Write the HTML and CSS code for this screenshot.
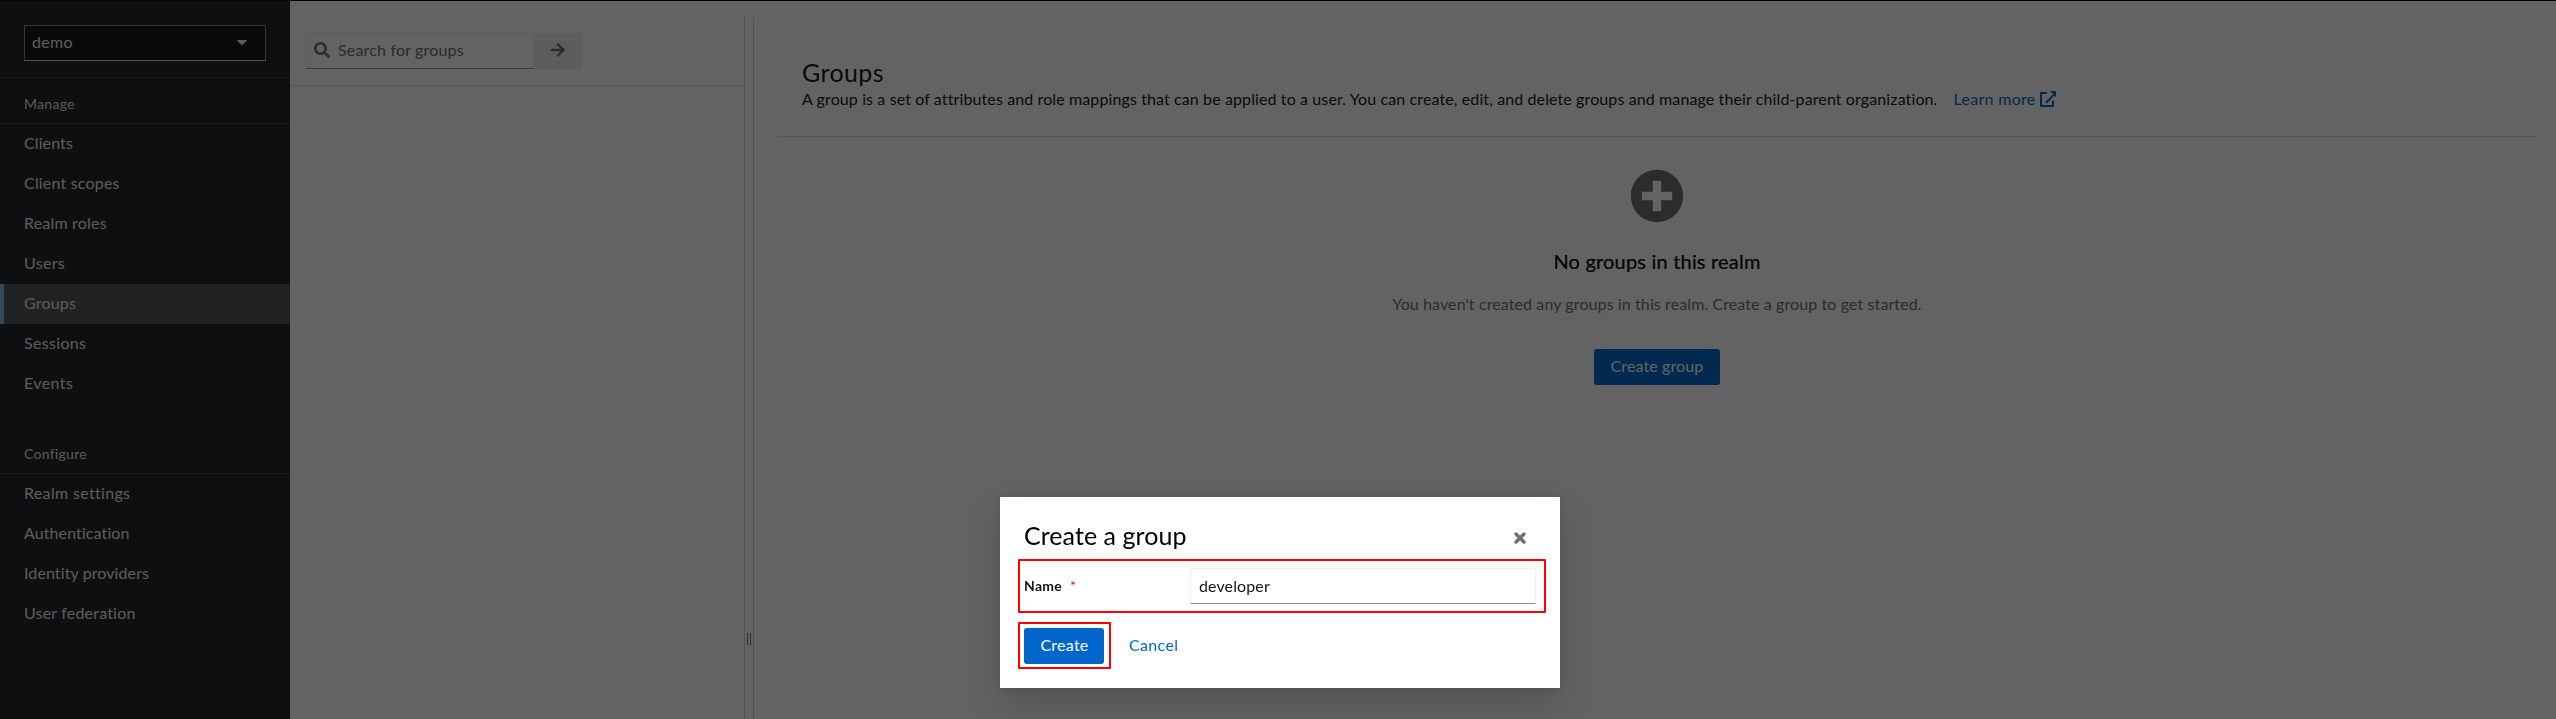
FILE: index.html
```html
<!DOCTYPE html>
<html lang="en">
<head>
<meta charset="utf-8">
<title>Groups</title>
<link rel="stylesheet" href="styles.css">
</head>
<body>
<div class="page">
  <nav class="sidebar">
    <div class="realm">
      <button class="realm-select"><span>demo</span><svg width="10" height="5" viewBox="0 0 10 5"><path fill="currentColor" d="M.5 0h9q.8.2.2.9L5.6 4.700q-.6.5-1.200 0L.3.9Q-.3.2.5 0z"/></svg></button>
    </div>
    <section class="nav-section">
      <h2>Manage</h2>
      <a class="w1">Clients</a>
      <a>Client scopes</a>
      <a>Realm roles</a>
      <a class="w3">Users</a>
      <a class="current">Groups</a>
      <a class="w3">Sessions</a>
      <a class="w4">Events</a>
    </section>
    <section class="nav-section">
      <h2>Configure</h2>
      <a class="w3">Realm settings</a>
      <a class="w1">Authentication</a>
      <a class="w1">Identity providers</a>
      <a>User federation</a>
    </section>
  </nav>
  <main class="main">
    <aside class="tree">
      <div class="toolbar">
        <div class="search">
          <svg width="16" height="16" viewBox="0 0 512 512"><path fill="currentColor" d="M505 442.700L405.300 343c-4.500-4.500-10.600-7-17-7H372c27.600-35.300 44-79.700 44-128C416 93.100 322.900 0 208 0S0 93.100 0 208s93.100 208 208 208c48.300 0 92.700-16.400 128-44v16.300c0 6.400 2.500 12.500 7 17l99.700 99.700c9.400 9.400 24.600 9.400 33.900 0l28.300-28.300c9.400-9.400 9.400-24.600.1-34zM208 336c-70.700 0-128-57.200-128-128 0-70.700 57.200-128 128-128 70.700 0 128 57.200 128 128 0 70.700-57.200 128-128 128z"/></svg>
          <span>Search for groups</span>
        </div>
        <button class="go" aria-label="Search"><svg width="14" height="16" viewBox="0 0 448 512"><path fill="currentColor" d="M190.500 66.900l22.200-22.200c9.400-9.400 24.600-9.400 33.900 0L441 239c9.400 9.400 9.400 24.600 0 33.900L246.600 467.300c-9.400 9.400-24.600 9.400-33.900 0l-22.200-22.200c-9.500-9.500-9.300-25 .4-34.300L311.400 296H24c-13.300 0-24-10.700-24-24v-32c0-13.300 10.700-24 24-24h287.400L190.900 101.200c-9.800-9.300-10-24.800-.4-34.300z"/></svg></button>
      </div>
    </aside>
    <div class="splitter"><i></i><i></i></div>
    <div class="content">
      <header class="intro">
        <h1>Groups</h1>
        <p><span class="desc">A group is a set of attributes and role mappings that can be applied to a user. You can create, edit, and delete groups and manage their child-parent organization.</span><a class="learn">Learn more</a><svg class="ext" width="16" height="16" viewBox="0 0 512 512"><path fill="currentColor" d="M224 32v64H64v352h320V304h64v176q0 32-32 32H32q-32 0-32-32V64q0-32 32-32zM316 0h180q16 0 16 16v180l-52-52-230 250q-10 10-20 0l-34-34q-8-8 0-18L420 104z"/></svg></p>
      </header>
      <div class="empty">
        <svg width="54" height="54" viewBox="0 0 512 512"><path fill="currentColor" d="M256 8C119 8 8 119 8 256s111 248 248 248 248-111 248-248S393 8 256 8zm144 276c0 6.600-5.400 12-12 12h-92v92c0 6.600-5.400 12-12 12h-56c-6.600 0-12-5.400-12-12v-92h-92c-6.600 0-12-5.400-12-12v-56c0-6.600 5.400-12 12-12h92v-92c0-6.600 5.400-12 12-12h56c6.600 0 12 5.400 12 12v92h92c6.600 0 12 5.400 12 12v56z"/></svg>
        <h2>No groups in this realm</h2>
        <p>You haven't created any groups in this realm. Create a group to get started.</p>
        <button class="primary">Create group</button>
      </div>
    </div>
  </main>
</div>
<div class="backdrop">
  <div class="modal" role="dialog">
    <header><h1>Create a group</h1>
      <svg width="12" height="12" viewBox="0 0 12 12"><path d="M2 2l8 8M10 2l-8 8" stroke="currentColor" stroke-width="3.300" stroke-linecap="round" fill="none"/></svg>
    </header>
    <div class="field">
      <label>Name<b>*</b></label>
      <div class="input">developer</div>
      <div class="mark"></div>
    </div>
    <footer>
      <div class="create"><button class="primary">Create</button><div class="mark"></div></div>
      <a>Cancel</a>
    </footer>
  </div>
</div>
</body>
</html>
```
FILE: styles.css
```css
* { box-sizing: border-box; }
body {
  margin: 0;
  height: 719px;
  overflow: hidden;
  background: #fff;
  color: #151515;
  font: 16px/24px Lato, "Open Sans", sans-serif;
  letter-spacing: .12px;
}
h1, h2, p { margin: 0; font-weight: 400; }
svg { display: block; flex: none; }
button { font: inherit; letter-spacing: inherit; }

.page {
  display: grid;
  grid-template-columns: 290px 1fr;
  height: 719px;
  border-top: 1px solid #000;
}

/* sidebar */
.sidebar { background: #212427; color: #ebebeb; }
.realm { height: 77px; padding: 24px; border-bottom: 1px solid #3c3f42; }
.realm-select {
  display: flex;
  align-items: center;
  justify-content: space-between;
  width: 242px;
  height: 36px;
  padding: 0 18px 2px 7px;
  background: #151515;
  border: 1px solid #8a8d90;
  border-bottom-color: #d2d2d2;
  color: #ebebeb;
  letter-spacing: .28px;
}
.nav-section h2 {
  height: 46px;
  padding: 15px 24px 9px;
  border-bottom: 1px solid #3c3f42;
  color: #e0e0e0;
  font-size: 14px;
  line-height: 21px;
  letter-spacing: .28px;
}
.nav-section + .nav-section { margin-top: 24px; }
.nav-section a {
  display: block;
  height: 40px;
  padding: 7px 24px 9px;
  letter-spacing: .19px;
}
.nav-section .w1 { letter-spacing: .1px; }
.nav-section .w3 { letter-spacing: .33px; }
.nav-section .w4 { letter-spacing: .42px; }
.nav-section .current { padding-left: 20px; background: #4f5255; border-left: 4px solid #73bcf7; }

/* group tree */
.main { display: grid; grid-template-columns: 454px 10px 1fr; }
.tree .toolbar {
  display: flex;
  height: 85px;
  padding: 32px 16px 16px;
  border-bottom: 1px solid #d2d2d2;
}
.search {
  display: flex;
  align-items: center;
  gap: 8px;
  width: 228px;
  padding: 0 7px 2px;
  border: 1px solid #f0f0f0;
  border-bottom-color: #8a8d90;
  color: #6a6e73;
  letter-spacing: .17px;
}
.go { display: grid; place-items: center; width: 48px; padding: 0 0 2px; border: 0; background: #f0f0f0; color: #6a6e73; }
.splitter {
  display: flex;
  justify-content: center;
  gap: 2px;
  margin-top: 16px;
  padding-top: 616px;
  border: solid #d2d2d2;
  border-width: 0 1px;
}
.splitter i { width: 1px; height: 12px; background: #6a6e73; }

/* content */
.content { padding: 0 20px 0 24px; }
.intro { height: 136px; padding: 55px 24px 0; border-bottom: 1px solid #d2d2d2; }
.intro h1 { height: 31px; font-size: 25px; line-height: 32px; letter-spacing: .4px; }
.intro p { display: flex; letter-spacing: .112px; }
.learn { margin-left: 16px; color: #06c; letter-spacing: .3px; }
.ext { margin: 4px 0 0 4px; color: #06c; }
.empty { display: flex; flex-direction: column; align-items: center; padding-top: 32px; color: #6a6e73; }
.empty h2 { margin-top: 23px; color: #000; font-size: 20px; line-height: 30px; letter-spacing: .19px; -webkit-text-stroke: .2px; }
.empty p { margin-top: 16px; letter-spacing: .1px; }
.primary {
  height: 36px;
  padding: 0 16px 2px;
  border: 0;
  border-radius: 3px;
  background: #06c;
  color: #fff;
}
.empty .primary { width: 126px; margin-top: 33px; }

/* dialog */
.backdrop {
  position: fixed;
  inset: 0;
  display: flex;
  justify-content: center;
  align-items: flex-start;
  padding: 497px 0 0 4px;
  background: rgba(3, 3, 3, .62);
}
.modal {
  width: 560px;
  height: 191px;
  padding: 24px;
  background: #fff;
  box-shadow: 0 16px 32px rgba(3, 3, 3, .16), 0 0 8px rgba(3, 3, 3, .1);
}
.modal header { display: flex; justify-content: space-between; align-items: center; height: 31px; padding-right: 10px; }
.modal h1 { padding-bottom: 2px; font-size: 25px; line-height: 29px; letter-spacing: .06px; color: #000; }
.modal header svg { margin-top: 3px; color: #6a6e73; }
.field { position: relative; display: flex; align-items: center; width: 512px; height: 36px; margin-top: 16px; }
.field label { width: 166px; padding-bottom: 1px; font-size: 14px; font-weight: 700; letter-spacing: .29px; }
.field b { margin-left: 8px; color: #c9190b; font-weight: 400; }
.input { width: 346px; height: 36px; padding: 5px 8px; border: 1px solid #f0f0f0; border-bottom-color: #8a8d90; }
.mark { position: absolute; border: 2px solid #f00; border-radius: 1px; }
.field .mark { inset: -9px -10px -9px -6px; }
.modal footer { display: flex; align-items: center; gap: 25px; margin-top: 24px; letter-spacing: .27px; }
.modal footer a { padding-bottom: 2px; color: #06c; letter-spacing: .35px; }
.create { position: relative; }
.create .primary { display: block; width: 80px; padding: 0 15px 2px 16px; }
.create .mark { inset: -6px -7px -5px -6px; }
```
